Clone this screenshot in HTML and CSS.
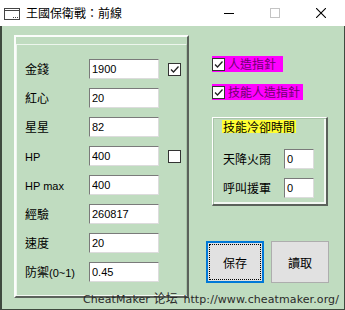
FILE: index.html
```html
<!DOCTYPE html>
<html lang="zh-Hant">
<head>
  <meta charset="UTF-8">
  <meta name="viewport" content="width=device-width, initial-scale=1.0">
  <title>王國保衛戰：前線</title>
  <link rel="stylesheet" href="styles.css">
</head>
<body>
  <div class="window">
    <div class="titlebar">
      <svg class="app-icon" width="16" height="12" viewBox="0 0 16 12">
        <rect x="0.5" y="0.5" width="15" height="11" fill="#fff" stroke="#444"/>
        <line x1="1" y1="2.5" x2="15" y2="2.5" stroke="#444"/>
        <path d="M9 9.5h1M11 9.5h1M13 9.5h1" stroke="#444"/>
      </svg>
      <span class="title">王國保衛戰：前線</span>
      <div class="caption-btns">
        <span class="cbtn"><svg width="10" height="10"><line x1="0" y1="5.5" x2="10" y2="5.5" stroke="#000"/></svg></span>
        <span class="cbtn"><svg width="10" height="10"><rect x="0.5" y="0.5" width="9" height="9" fill="none" stroke="#c4c4c4"/></svg></span>
        <span class="cbtn"><svg width="10" height="10"><path d="M0 0L10 10M10 0L0 10" stroke="#000" stroke-width="1.1"/></svg></span>
      </div>
    </div>

    <div class="client">
      <div class="panel">
        <div class="panel-in">
          <div class="form">
            <label class="lbl">金錢</label>
            <input class="txt" value="1900">
            <span class="chk"><svg width="11" height="11"><path d="M2 5.5L4.5 8L9.5 2.5" fill="none" stroke="#222" stroke-width="1.3"/></svg></span>

            <label class="lbl">紅心</label>
            <input class="txt" value="20">
            <span></span>

            <label class="lbl">星星</label>
            <input class="txt" value="82">
            <span></span>

            <label class="lbl"><span class="en">HP</span></label>
            <input class="txt" value="400">
            <span class="chk"></span>

            <label class="lbl"><span class="en">HP max</span></label>
            <input class="txt" value="400">
            <span></span>

            <label class="lbl">經驗</label>
            <input class="txt" value="260817">
            <span></span>

            <label class="lbl">速度</label>
            <input class="txt" value="20">
            <span></span>

            <label class="lbl">防禦<span class="en">(0~1)</span></label>
            <input class="txt" value="0.45">
            <span></span>
          </div>
        </div>
      </div>

      <div class="side">
        <label class="flag flag-short">
          <span class="chk"><svg width="11" height="11"><path d="M2 5.5L4.5 8L9.5 2.5" fill="none" stroke="#222" stroke-width="1.3"/></svg></span>
          人造指針
        </label>
        <label class="flag flag-long">
          <span class="chk"><svg width="11" height="11"><path d="M2 5.5L4.5 8L9.5 2.5" fill="none" stroke="#222" stroke-width="1.3"/></svg></span>
          技能人造指針
        </label>

        <div class="group">
          <div class="legend">技能冷卻時間</div>
          <div class="group-form">
            <label class="lbl">天降火雨</label>
            <input class="txt" value="0">
            <label class="lbl">呼叫援軍</label>
            <input class="txt" value="0">
          </div>
        </div>

        <div class="actions">
          <button class="btn btn-focus">保存</button>
          <button class="btn">讀取</button>
        </div>
      </div>

      <div class="footer">CheatMaker <span class="cjk">论坛</span> http://www.cheatmaker.org/</div>
    </div>
  </div>
</body>
</html>
```

FILE: styles.css
```css
* {
  box-sizing: border-box;
}

body {
  margin: 0;
  font-family: "Noto Sans CJK TC", sans-serif;
  font-size: 12px;
  color: #000;
}

.window {
  width: 345px;
  height: 310px;
  display: flex;
  flex-direction: column;
  background: #fff;
}

.titlebar {
  height: 26px;
  flex: none;
  display: flex;
  align-items: center;
  padding-right: 1px;
}

.app-icon {
  margin-left: 4px;
  margin-top: 1px;
}

.title {
  margin-left: 6px;
  line-height: 16px;
}

.caption-btns {
  margin-left: auto;
  display: flex;
}

.cbtn {
  width: 46px;
  height: 26px;
  display: flex;
  align-items: center;
  justify-content: center;
}

.client {
  position: relative;
  flex: 1;
  display: flex;
  gap: 17px;
  padding: 9px 0 0 13px;
  background: #c0dcc0;
  border: 1px solid #3f4a3f;
  border-left-width: 2px;
  border-top: 0;
}

/* left frame */
.panel {
  width: 175px;
  height: 263px;
  margin-left: -1px;
  border: 2px solid;
  border-color: #fbfdfb #5b625b #5b625b #fbfdfb;
}

.panel-in {
  height: calc(100% - 7px);
  margin-top: 7px;
  padding: 14px 0 0 8px;
  border: 1px solid;
  border-color: #edf6ed #a9c4a9 #f2f8f2 #edf6ed;
}

.form {
  display: grid;
  grid-template-columns: 55px 70px 13px;
  grid-auto-rows: 20px;
  column-gap: 9px;
  row-gap: 9px;
  align-items: center;
}

.lbl {
  line-height: 20px;
  white-space: nowrap;
}

.en {
  font-family: "Liberation Sans", sans-serif;
  font-size: 11px;
}

.txt {
  width: 70px;
  height: 20px;
  margin: 0;
  padding: 0 2px 1px;
  font-family: "Liberation Sans", sans-serif;
  font-size: 11px;
  color: #000;
  background: #fff;
  border: 1px solid;
  border-color: #7a7a7a #dcdcdc #dcdcdc #7a7a7a;
  outline: none;
}

.chk {
  width: 13px;
  height: 13px;
  display: block;
  padding: 0;
  background: #fff;
  border: 1px solid #333;
}

.chk svg {
  display: block;
}

/* right column */
.side {
  display: flex;
  flex-direction: column;
  align-items: flex-start;
  padding-top: 21px;
}

.flag {
  margin-left: 6px;
  height: 16px;
  display: flex;
  align-items: center;
  gap: 3px;
  background: #ff00ff;
  color: #6e006e;
  line-height: 16px;
  white-space: nowrap;
}

.flag-short {
  width: 71px;
}

.flag-long {
  width: 91px;
  margin-top: 12px;
}

.group {
  margin: 17px 0 0 6px;
  width: 116px;
  height: 89px;
  border-style: solid;
  border-width: 1px 2px 2px 1px;
  border-color: #fff #5b625b #5b625b #fff;
  box-shadow: inset 1px 1px 0 #aac5aa, inset -2px -2px 0 #f2f8f2;
}

.legend {
  display: inline-block;
  margin: -2px 0 0 9px;
  padding: 0 1px;
  line-height: 13px;
  background: #ffff33;
}

.group-form {
  display: grid;
  grid-template-columns: 61px 30px;
  grid-auto-rows: 20px;
  row-gap: 9px;
  align-items: center;
  margin-top: 14px;
  padding-left: 10px;
}

.group-form .txt {
  width: 30px;
}

.actions {
  display: flex;
  gap: 7px;
  margin-top: 35px;
}

.btn {
  position: relative;
  width: 58px;
  height: 42px;
  padding: 0;
  font-family: "Noto Sans CJK TC", sans-serif;
  font-size: 12px;
  color: #000;
  background: #e1e1e1;
  border: 1px solid #adadad;
}

.btn-focus {
  border: 2px solid #0078d7;
}

.btn-focus::after {
  content: "";
  position: absolute;
  inset: 1px;
  border: 1px dotted #000;
}

.footer {
  position: absolute;
  left: 81px;
  top: 264px;
  font-family: "DejaVu Sans", sans-serif;
  font-size: 11px;
  line-height: 16px;
  letter-spacing: 0.1px;
  color: #2a2a2a;
  white-space: nowrap;
}

.cjk {
  font-family: "Noto Sans CJK SC", sans-serif;
  font-size: 12px;
  margin-right: 2px;
}
```
